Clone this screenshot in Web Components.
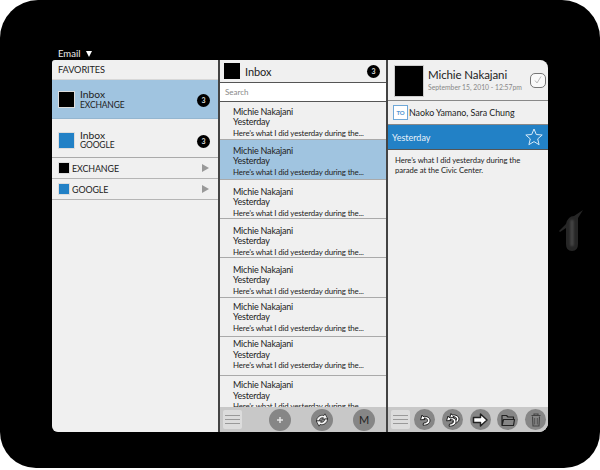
<!DOCTYPE html>
<html>
<head>
<meta charset="utf-8">
<style>
  html, body { margin: 0; background: #fff; }
  body { font-family: Lato, "Liberation Sans", sans-serif; color: #222; }
</style>
</head>
<body>
<tablet-frame>
  <span slot="status">Email</span>
  <folder-pane></folder-pane>
  <message-list></message-list>
  <message-view></message-view>
</tablet-frame>

<script>
  const CURL = 'M7 5L5.500 9.800L10 9.500L9 8C11 8 12.500 9 12.500 10.500C12.500 12 11 13 8.500 13L8 15.200C12 15.500 15 13.500 15 10.500C15 7.500 12 6 8 6.500Z';
  const ARC = 'M4.500 11C4.500 7 8.500 4.500 12 5.500L13 3.800L15.800 9L10.500 9.300L11.500 7.800C9 7.300 7.300 8.800 7.300 11Z';

  const ICONS = {
    plus: '<path d="M10 7v6M7 10h6" stroke="#e4e4e4" stroke-width="1.500" fill="none"/>',
    sync: `<path d="${ARC}" fill="#f4f4f4" stroke="#222" stroke-width=".8"/><path d="${ARC}" transform="rotate(180 10 10)" fill="#f4f4f4" stroke="#222" stroke-width=".8"/>`,
    reply: `<path d="${CURL}" fill="#fff" stroke="#222" stroke-width="1"/>`,
    replyall: `<path d="${CURL}" transform="translate(2 -1.500)" fill="#fff" stroke="#222" stroke-width="1"/><path d="${CURL}" transform="translate(-1 1)" fill="#fff" stroke="#222" stroke-width="1"/>`,
    forward: '<path d="M3.500 7.500h7v-3.500l6.500 6-6.500 6v-3.500h-7z" fill="#fff" stroke="#222" stroke-width="1.500" stroke-linejoin="round"/>',
    folder: '<path d="M4 15.500V5.500h4.500l1.500 1.500h5.500v2.500M4 15.500h11.500l1-6H5.500z" fill="none" stroke="#222" stroke-width="1.200" stroke-linejoin="round"/>',
    trash: '<path d="M5.500 5.500h9M8 5V4h4v1M6.500 6.500l.5 9.500h6l.5-9.500" fill="none" stroke="#444" stroke-width="1.100"/><path d="M8.700 8v6.500M11.300 8v6.500" stroke="#444" stroke-width=".8"/>'
  };

  class TabletFrame extends HTMLElement {
    constructor() {
      super();
      this.attachShadow({ mode: 'open' });
      this.shadowRoot.innerHTML = `
        <style>
          :host { display: block; width: 600px; height: 470px; position: relative; overflow: hidden; }
          .shell { box-sizing: border-box; width: 600px; height: 468px; background: #000; border-radius: 38px 38px 36px 36px; padding: 48px 52px 0; }
          .status { height: 12px; padding-left: 6px; display: flex; align-items: center; gap: 6px; color: #eee; font-size: 9.500px; line-height: 12px; }
          .status i { width: 0; height: 0; border-left: 3.500px solid transparent; border-right: 3.500px solid transparent; border-top: 6.500px solid #fff; }
          .screen { height: 372px; display: grid; grid-template-columns: 166px 1fr 160px; gap: 2px; background: #444; border-radius: 3px 8px 9px 6px; overflow: hidden; }
          .grip { position: absolute; left: 556px; top: 206px; }
        </style>
        <div class="shell">
          <div class="status"><slot name="status"></slot><i></i></div>
          <div class="screen"><slot></slot></div>
        </div>
        <svg class="grip" width="30" height="50" viewBox="0 0 30 50">
          <path d="M3 25L10 18Q12 10 18 10L27 4L22 12V38Q22 45 16 45Q10 45 10 38V22L4 26Z" fill="#262626" style="filter: blur(.6px)"/>
          <path d="M16 14V40" stroke="#4a4a4a" stroke-width="3" style="filter: blur(1px)"/>
        </svg>`;
    }
  }

  class UnreadBadge extends HTMLElement {
    constructor() {
      super();
      this.attachShadow({ mode: 'open' });
      this.shadowRoot.innerHTML = `
        <style>
          :host { display: flex; align-items: center; justify-content: center; width: 13px; height: 13px; border-radius: 50%; background: #000; color: #ddd; font-size: 7px; line-height: 13px; font-weight: 700; flex: none; }
        </style>
        <slot></slot>`;
    }
  }

  class FolderPane extends HTMLElement {
    constructor() {
      super();
      this.attachShadow({ mode: 'open' });
      this.shadowRoot.innerHTML = `
        <style>
          :host { display: block; background: #f0f0f0; color: #222; }
          .title { height: 19px; padding-left: 6px; line-height: 20px; border-bottom: 1px solid #d8d8d8; font-size: 9.200px; letter-spacing: -.1px; }
          .inbox { display: flex; align-items: center; box-sizing: border-box; height: 39px; padding: 1px 8px 0 6px; }
          .inbox.on { background: #a0c4e0; border-bottom: 1px solid #94b6d0; }
          .inbox.plain { border-bottom: 1px solid #aaa; padding-top: 4px; }
          .sq { width: 17px; height: 17px; background: #000; border: 1px solid #ddd; box-sizing: border-box; margin-right: 5px; flex: none; }
          .sq.blue { background: #2281c6; }
          .names { flex: 1; }
          .names b { display: block; font-weight: 400; font-size: 10.300px; line-height: 10.500px; }
          .names span { display: block; font-size: 8.500px; line-height: 10.500px; letter-spacing: -.15px; }
          unread-badge { margin-top: 2px; }
          .acct { display: flex; align-items: center; height: 20px; padding: 0 6px; border-bottom: 1.500px solid #b5b5b5; font-size: 8.900px; letter-spacing: -.1px; }
          .acct .sq { width: 12px; height: 12px; margin-right: 2px; }
          .acct span { flex: 1; }
          .tri { width: 0; height: 0; border-left: 7px solid #999; border-top: 4px solid transparent; border-bottom: 4px solid transparent; margin-right: 3px; }
        </style>
        <div class="title">FAVORITES</div>
        <div class="inbox on"><div class="sq"></div><div class="names"><b>Inbox</b><span>EXCHANGE</span></div><unread-badge>3</unread-badge></div>
        <div class="inbox plain"><div class="sq blue"></div><div class="names"><b>Inbox</b><span>GOOGLE</span></div><unread-badge>3</unread-badge></div>
        <div class="acct"><div class="sq"></div><span>EXCHANGE</span><div class="tri"></div></div>
        <div class="acct"><div class="sq blue"></div><span>GOOGLE</span><div class="tri"></div></div>`;
    }
  }

  class MailRow extends HTMLElement {
    constructor() {
      super();
      this.attachShadow({ mode: 'open' });
      this.shadowRoot.innerHTML = `
        <style>
          :host { display: block; box-sizing: border-box; height: var(--h, 39px); padding: var(--pad, 5px) 0 0 13px; border-bottom: 1px solid #aaa; overflow: hidden; background: #f0f0f0; line-height: 10.500px; color: #222; }
          :host([active]) { background: #a0c4e0; }
          .big { font-size: 9px; letter-spacing: -.2px; }
          .snip { font-size: 7.900px; letter-spacing: -.13px; white-space: nowrap; }
        </style>
        <div class="big">Michie Nakajani</div>
        <div class="big">Yesterday</div>
        <div class="snip">Here’s what I did yesterday during the...</div>`;
    }
  }

  class ToolBar extends HTMLElement {
    constructor() {
      super();
      this.attachShadow({ mode: 'open' });
      this.shadowRoot.innerHTML = `
        <style>
          :host { display: flex; align-items: center; height: 25px; background: #c8c8c8; padding: 0 3px; }
          .menu { width: 19px; height: 19px; background: #dcdcdc; border-radius: 2px; display: flex; flex-direction: column; justify-content: center; gap: 3px; align-items: center; flex: none; }
          .menu i { width: 15px; height: 1px; background: #999; }
          .btns { display: flex; flex: 1; align-items: center; }
        </style>
        <div class="menu"><i></i><i></i><i></i></div>
        <div class="btns"><slot></slot></div>`;
    }
  }

  class ToolButton extends HTMLElement {
    constructor() {
      super();
      this.attachShadow({ mode: 'open' });
      const icon = ICONS[this.getAttribute('icon')] || '';
      this.shadowRoot.innerHTML = `
        <style>
          :host { display: flex; align-items: center; justify-content: center; width: var(--size, 22px); height: var(--size, 22px); border-radius: 50%; background: #868686; flex: none; font-size: 11px; color: #222; }
          svg { width: 20px; height: 20px; display: block; }
        </style>
        ${icon ? `<svg viewBox="0 0 20 20">${icon}</svg>` : '<slot></slot>'}`;
    }
  }

  class MessageList extends HTMLElement {
    constructor() {
      super();
      this.attachShadow({ mode: 'open' });
      // row heights and text offsets are uneven in the mockup
      const sizes = [[38, 4.6], [40, 5.5], [39, 6.5], [39, 6.5], [40, 6.5], [39, 3.5], [39, 2], [39, 4.3]];
      const rows = sizes.map(([h, pad], i) =>
        `<mail-row style="--h:${h}px;--pad:${pad}px" ${i === 1 ? 'active' : ''}></mail-row>`).join('');
      this.shadowRoot.innerHTML = `
        <style>
          :host { display: flex; flex-direction: column; background: #f0f0f0; min-height: 0; overflow: hidden; }
          .head { display: flex; align-items: center; height: 22px; flex: none; padding: 0 6px 0 4px; font-size: 11px; letter-spacing: -.1px; color: #222; border-bottom: 1px solid #555; }
          .head .sq { width: 16px; height: 16px; background: #000; margin-right: 5px; }
          .head span { flex: 1; }
          .search { height: 18px; flex: none; background: #fff; border-bottom: 1px solid #555; padding-left: 5px; font-size: 8px; line-height: 18px; color: #888; }
          .rows { flex: 1; min-height: 0; overflow: hidden; }
          tool-bar { flex: none; }
          .sp { width: 20px; flex: none; }
        </style>
        <div class="head"><div class="sq"></div><span>Inbox</span><unread-badge>3</unread-badge></div>
        <div class="search">Search</div>
        <div class="rows">${rows}</div>
        <tool-bar>
          <span class="sp" style="width:27px"></span>
          <tool-button icon="plus"></tool-button>
          <span class="sp"></span>
          <tool-button icon="sync"></tool-button>
          <span class="sp"></span>
          <tool-button>M</tool-button>
        </tool-bar>`;
    }
  }

  class MessageView extends HTMLElement {
    constructor() {
      super();
      this.attachShadow({ mode: 'open' });
      this.shadowRoot.innerHTML = `
        <style>
          :host { display: flex; flex-direction: column; background: #f0f0f0; color: #222; min-height: 0; }
          .from { display: flex; align-items: center; flex: none; padding: 1px 2px 0 6px; box-sizing: border-box; height: 41px; border-bottom: 1px solid #888; }
          .pic { width: 30px; height: 32px; background: #000; border: 1px solid #ccc; box-sizing: border-box; margin-right: 4px; flex: none; }
          .who { flex: 1; white-space: nowrap; }
          .who b { display: block; font-weight: 400; font-size: 11.500px; letter-spacing: -.1px; line-height: 14px; }
          .who small { display: block; font-size: 6.800px; line-height: 11px; color: #888; }
          .check { width: 16px; height: 15px; border: 1.500px solid #777; border-radius: 5px; background: #fafafa; box-sizing: border-box; flex: none; margin-top: -1px; }
          .check svg { display: block; }
          .to { display: flex; align-items: center; height: 23px; flex: none; padding-left: 5px; font-size: 8.900px; letter-spacing: -.05px; border-bottom: 1px solid #888; }
          .to i { width: 15px; height: 15px; border: 1px solid #6fa8d8; box-sizing: border-box; background: #fff; color: #4f93cf; font: 700 6px/13px Lato, sans-serif; text-align: center; margin-right: 1px; flex: none; }
          .subj { display: flex; align-items: center; justify-content: space-between; height: 24px; flex: none; background: #2281c6; color: #e8f2fa; font-size: 9px; padding: 0 5px 0 4px; border-bottom: 1px solid #555; }
          .body { flex: 1; padding: 5px 7px; font-size: 7.700px; letter-spacing: -.05px; line-height: 10px; }
          tool-bar { flex: none; --size: 21px; padding-right: 2px; }
          .sp { flex: 1; }
        </style>
        <div class="from">
          <div class="pic"></div>
          <div class="who"><b>Michie Nakajani</b><small>September 15, 2010 - 12:57pm</small></div>
          <div class="check"><svg width="13" height="12" viewBox="0 0 13 12"><path d="M4 6.500l2 2.500 4-6.500" fill="none" stroke="#bbb" stroke-width="1"/></svg></div>
        </div>
        <div class="to"><i>TO</i><span>Naoko Yamano, Sara Chung</span></div>
        <div class="subj"><span>Yesterday</span>
          <svg width="18" height="18" viewBox="0 0 18 18"><path d="M9 1l2.300 5.500 5.900.5-4.500 3.900 1.400 5.800L9 13.600 3.900 16.700l1.400-5.800L.8 7l5.900-.5z" fill="none" stroke="#d8ebf8" stroke-width="1"/></svg>
        </div>
        <div class="body">Here’s what I did yesterday during the parade at the Civic Center.</div>
        <tool-bar>
          <span class="sp" style="flex:none;width:4px"></span>
          <tool-button icon="reply"></tool-button><span class="sp"></span>
          <tool-button icon="replyall"></tool-button><span class="sp"></span>
          <tool-button icon="forward"></tool-button><span class="sp"></span>
          <tool-button icon="folder"></tool-button><span class="sp"></span>
          <tool-button icon="trash"></tool-button>
        </tool-bar>`;
    }
  }

  customElements.define('unread-badge', UnreadBadge);
  customElements.define('tool-button', ToolButton);
  customElements.define('tool-bar', ToolBar);
  customElements.define('mail-row', MailRow);
  customElements.define('folder-pane', FolderPane);
  customElements.define('message-list', MessageList);
  customElements.define('message-view', MessageView);
  customElements.define('tablet-frame', TabletFrame);
</script>
</body>
</html>
